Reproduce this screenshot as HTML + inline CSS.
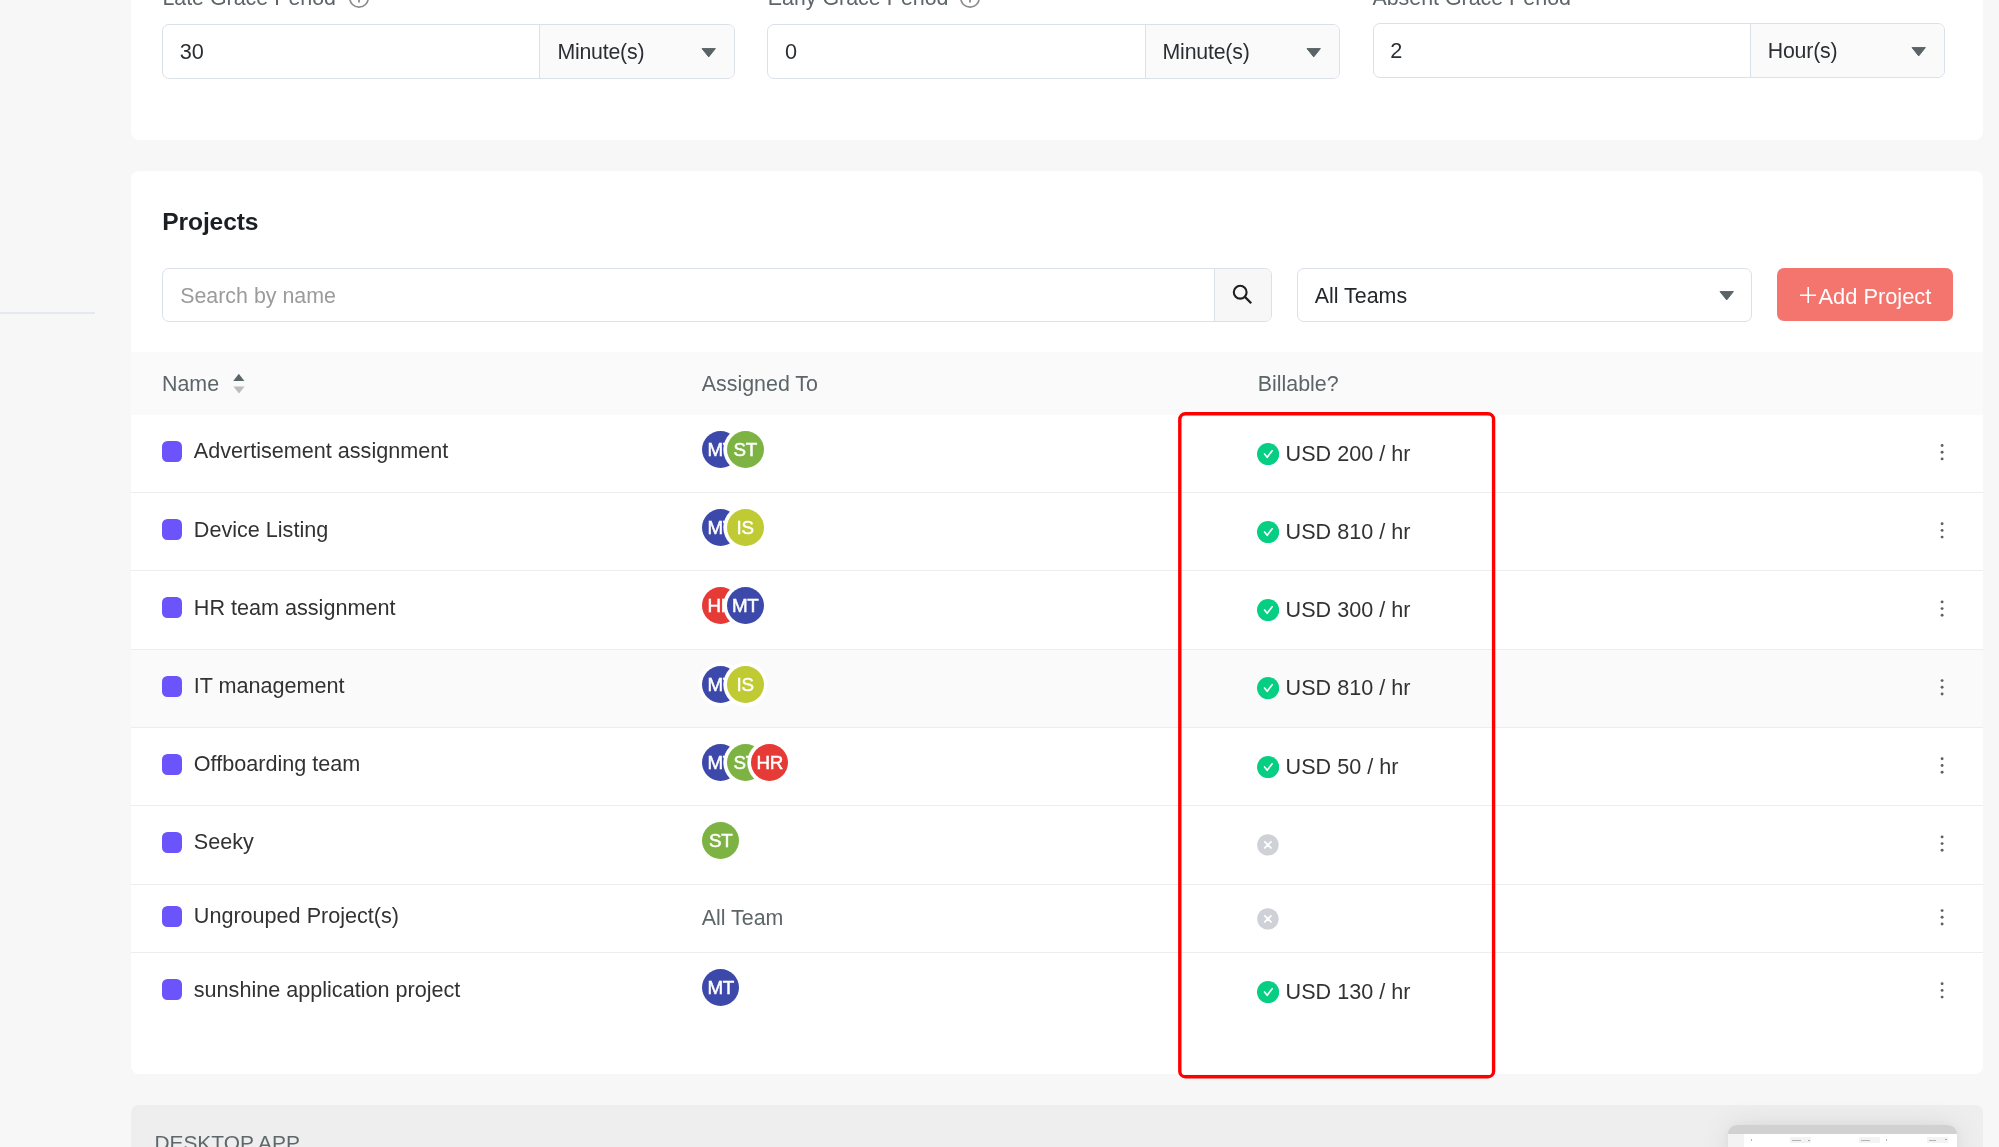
<!DOCTYPE html>
<html>
<head>
<meta charset="utf-8">
<title>Projects</title>
<style>
*{box-sizing:border-box;margin:0;padding:0}
html,body{width:1999px;height:1147px;overflow:hidden;background:#f7f7f7;font-family:"Liberation Sans",sans-serif;color:#333;}
body{position:relative}
#wrap{position:absolute;left:0;top:0;width:1999px;height:1147px;overflow:hidden;will-change:transform}
.abs{position:absolute}
.sideline{position:absolute;left:0;top:312.3px;width:94.6px;height:1.6px;background:#e4e9f0}
.card{position:absolute;left:131.2px;width:1852.2px;background:#fff;border-radius:8px}
#c1{top:-40px;height:180.4px}
#c2{top:171px;height:903px}
.lbl{position:absolute;font-size:21.4px;line-height:24px;color:#5c6669;white-space:nowrap}
.info{position:absolute;width:22px;height:22px}
.grp{position:absolute;height:55px;width:572.8px;border:1px solid #dbe1e9;border-radius:7px;background:#fff;overflow:hidden}
.grp .val{position:absolute;left:16.6px;top:14.9px;font-size:21.7px;line-height:24px;color:#2b2f33}
.grp .addon{position:absolute;right:0;top:0;bottom:0;width:194.6px;border-left:1px solid #dbe1e9;background:#fafafa}
.grp .addon span{position:absolute;left:17px;top:15.2px;font-size:21.3px;line-height:24px;color:#2b2f33;letter-spacing:-.2px}
.tri{position:absolute;width:15.4px;height:9.4px}
h2{position:absolute;left:31px;top:37px;font-size:24.6px;line-height:28px;font-weight:700;color:#1b1e22;letter-spacing:-.1px}
.search{position:absolute;left:31px;top:97px;width:1109.6px;height:54px;border:1px solid #dbe1e9;border-radius:7px;background:#fff;overflow:hidden}
.search .ph{position:absolute;left:17px;top:15.2px;font-size:21.4px;line-height:24px;color:#9b9b9b}
.search .sbtn{position:absolute;right:0;top:0;bottom:0;width:57px;border-left:1px solid #dbe1e9;background:#f7f7f7}
.sel{position:absolute;left:1165.4px;top:97px;width:455.6px;height:54px;border:1px solid #dbe1e9;border-radius:7px;background:#fff}
.sel span{position:absolute;left:17.2px;top:14.6px;font-size:21.4px;line-height:24px;color:#23272b}
.btn{position:absolute;left:1646.2px;top:96.8px;width:175.6px;height:53.6px;border-radius:7px;background:#f3756e;color:#fff}
.btn span{position:absolute;left:41.2px;top:17px;font-size:21.8px;line-height:24px;white-space:nowrap}
.thead{position:absolute;left:0;right:0;top:181.3px;height:62.7px;background:#fafafa}
.thead span{position:absolute;top:19.7px;font-size:21.4px;line-height:24px;color:#5c6669;white-space:nowrap}
.row{position:absolute;left:0;right:0;border-bottom:1.4px solid #ebeef1;background:#fff}
.row.hov{background:#fafafa}
.row.last{border-bottom:none}
.sq{position:absolute;left:30.8px;width:20.2px;height:21.2px;border-radius:5.5px;background:#6c54fc}
.nm{position:absolute;left:62.6px;font-size:21.6px;line-height:24px;color:#323232;white-space:nowrap}
.allteam{position:absolute;left:570.6px;font-size:21.4px;line-height:24px;color:#5c6669;white-space:nowrap}
.avs{position:absolute;left:568.1px;top:12.7px;height:43px}
.av{position:absolute;top:3.3px;margin-left:3px;width:37px;height:37px;border-radius:50%;box-shadow:0 0 0 3.7px #fff;color:#fff;font-size:18.8px;line-height:38px;text-align:center;overflow:hidden}
.av i{font-style:normal;display:block;letter-spacing:-.2px;-webkit-text-stroke:.5px #fff}
.av.b{background:#3c49ab}.av.g{background:#7cb343}.av.l{background:#c0ca33}.av.r{background:#e53a36}
.ok{position:absolute;left:1125.8px;top:27.8px;width:22.2px;height:22.2px}
.no{position:absolute;left:1124.8px;width:23.8px;height:23.8px}
.usd{position:absolute;left:1154.4px;top:26.5px;font-size:21.6px;line-height:24px;color:#323232;white-space:nowrap}
.dotsov{position:absolute;left:1798.8px;top:229px;width:24px;height:620px;fill:#5a6366}
.hl{position:absolute;left:1170px;top:405px;width:335px;height:680px}
.banner{position:absolute;left:131.2px;top:1104.8px;width:1852.2px;height:80px;background:#eeeeee;border-radius:8px}
.banner span{position:absolute;left:23.2px;top:26.2px;font-size:20.9px;line-height:24px;color:#5e686b;white-space:nowrap}
.thumb{position:absolute;left:1727.6px;top:1124.8px;width:229.6px;height:40px;border-radius:10px 10px 0 0;background:#fff;box-shadow:0 0 30px rgba(0,0,0,.085),0 0 8px rgba(0,0,0,.04)}
.thumb:before{content:"";position:absolute;left:0;right:0;top:0;height:9.4px;background:#d1d1d1;border-radius:10px 10px 0 0}
.thumb i{position:absolute;display:block}
.thumb:after{content:"";position:absolute;left:0;top:9.6px;width:16px;bottom:0;background:#f3f3f3}
</style>
</head>
<body>
<div id="wrap">
<div class="sideline"></div>

<div class="card" id="c1">
  <div class="lbl" style="left:31.2px;top:26.2px">Late Grace Period</div>
  <svg class="info" style="left:216.7px;top:27.2px" viewBox="0 0 22 22"><circle cx="11" cy="11" r="9.2" fill="none" stroke="#8a8d8f" stroke-width="1.7"/><path d="M11 9.6 V15.6" stroke="#8a8d8f" stroke-width="1.8"/></svg>
  <div class="lbl" style="left:636.6px;top:26.2px">Early Grace Period</div>
  <svg class="info" style="left:827.5px;top:27.2px" viewBox="0 0 22 22"><circle cx="11" cy="11" r="9.2" fill="none" stroke="#8a8d8f" stroke-width="1.7"/><path d="M11 9.6 V15.6" stroke="#8a8d8f" stroke-width="1.8"/></svg>
  <div class="lbl" style="left:1241.2px;top:25.5px">Absent Grace Period</div>

  <div class="grp" style="left:31px;top:63.8px">
    <div class="val">30</div>
    <div class="addon"><span>Minute(s)</span>
      <svg class="tri" style="right:17.6px;top:23.2px" viewBox="0 0 15.4 9.4"><path d="M1 0.6 H14.4 L7.7 8.9 Z" fill="#5a6366" stroke="#5a6366" stroke-width="1" stroke-linejoin="round"/></svg>
    </div>
  </div>
  <div class="grp" style="left:636.2px;top:63.8px">
    <div class="val">0</div>
    <div class="addon"><span>Minute(s)</span>
      <svg class="tri" style="right:17.6px;top:23.2px" viewBox="0 0 15.4 9.4"><path d="M1 0.6 H14.4 L7.7 8.9 Z" fill="#5a6366" stroke="#5a6366" stroke-width="1" stroke-linejoin="round"/></svg>
    </div>
  </div>
  <div class="grp" style="left:1241.4px;top:63.1px">
    <div class="val">2</div>
    <div class="addon"><span>Hour(s)</span>
      <svg class="tri" style="right:17.6px;top:23.2px" viewBox="0 0 15.4 9.4"><path d="M1 0.6 H14.4 L7.7 8.9 Z" fill="#5a6366" stroke="#5a6366" stroke-width="1" stroke-linejoin="round"/></svg>
    </div>
  </div>
</div>

<div class="card" id="c2">
  <h2>Projects</h2>
  <div class="search">
    <div class="ph">Search by name</div>
    <div class="sbtn">
      <svg style="position:absolute;left:17px;top:15.4px;width:21px;height:21px" viewBox="0 0 21 21"><circle cx="8.2" cy="8.2" r="6.4" fill="none" stroke="#1f1f1f" stroke-width="2.1"/><path d="M12.9 12.9 L19.2 19.2" stroke="#1f1f1f" stroke-width="2.3" stroke-linecap="butt"/></svg>
    </div>
  </div>
  <div class="sel"><span>All Teams</span>
    <svg class="tri" style="right:16.6px;top:22px" viewBox="0 0 15.4 9.4"><path d="M1 0.6 H14.4 L7.7 8.9 Z" fill="#5a6366" stroke="#5a6366" stroke-width="1" stroke-linejoin="round"/></svg>
  </div>
  <div class="btn">
    <svg style="position:absolute;left:22.4px;top:18.9px;width:16.4px;height:16.4px" viewBox="0 0 16.4 16.4"><path d="M8.2 0 V16.4 M0 8.2 H16.4" stroke="#fff" stroke-width="1.6"/></svg>
    <span>Add Project</span>
  </div>
  <div class="thead">
    <span style="left:30.8px">Name</span>
    <svg style="position:absolute;left:101.4px;top:21.4px;width:12px;height:20px" viewBox="0 0 12 20"><path d="M0.2 7.0 L5.8 -0.2 L11.4 7.0 Z" fill="#5a6568"/><path d="M0.4 12.6 L6 19.6 L11.6 12.6 Z" fill="#bcbcbc"/></svg>
    <span style="left:570.6px">Assigned To</span>
    <span style="left:1126.6px">Billable?</span>
  </div>
<div class="row" style="top:244.0px;height:78.3px"><span class="sq" style="top:26.0px"></span><span class="nm" style="top:23.82px">Advertisement assignment</span><span class="avs"><span class="av b" style="left:0.0px;z-index:1"><i>MT</i></span><span class="av g" style="left:24.5px;z-index:2"><i>ST</i></span></span><svg class="ok" viewBox="0 0 22 22"><circle cx="11" cy="11" r="11" fill="#06cf83"/><path d="M7.5 10.8 L10.1 14.2 L15.0 7.7" fill="none" stroke="#fff" stroke-width="1.6" stroke-linecap="round" stroke-linejoin="round"/></svg><span class="usd" style="top:26.82px">USD 200 / hr</span></div>
<div class="row" style="top:322.3px;height:77.9px"><span class="sq" style="top:26.0px"></span><span class="nm" style="top:24.52px">Device Listing</span><span class="avs"><span class="av b" style="left:0.0px;z-index:1"><i>MT</i></span><span class="av l" style="left:24.5px;z-index:2"><i>IS</i></span></span><svg class="ok" viewBox="0 0 22 22"><circle cx="11" cy="11" r="11" fill="#06cf83"/><path d="M7.5 10.8 L10.1 14.2 L15.0 7.7" fill="none" stroke="#fff" stroke-width="1.6" stroke-linecap="round" stroke-linejoin="round"/></svg><span class="usd" style="top:26.52px">USD 810 / hr</span></div>
<div class="row" style="top:400.2px;height:78.4px"><span class="sq" style="top:26.0px"></span><span class="nm" style="top:24.62px">HR team assignment</span><span class="avs"><span class="av r" style="left:0.0px;z-index:1"><i>HR</i></span><span class="av b" style="left:24.5px;z-index:2"><i>MT</i></span></span><svg class="ok" viewBox="0 0 22 22"><circle cx="11" cy="11" r="11" fill="#06cf83"/><path d="M7.5 10.8 L10.1 14.2 L15.0 7.7" fill="none" stroke="#fff" stroke-width="1.6" stroke-linecap="round" stroke-linejoin="round"/></svg><span class="usd" style="top:26.62px">USD 300 / hr</span></div>
<div class="row hov" style="top:478.6px;height:78.2px"><span class="sq" style="top:26.0px"></span><span class="nm" style="top:24.22px">IT management</span><span class="avs"><span class="av b" style="left:0.0px;z-index:1"><i>MT</i></span><span class="av l" style="left:24.5px;z-index:2"><i>IS</i></span></span><svg class="ok" viewBox="0 0 22 22"><circle cx="11" cy="11" r="11" fill="#06cf83"/><path d="M7.5 10.8 L10.1 14.2 L15.0 7.7" fill="none" stroke="#fff" stroke-width="1.6" stroke-linecap="round" stroke-linejoin="round"/></svg><span class="usd" style="top:26.22px">USD 810 / hr</span></div>
<div class="row" style="top:556.8px;height:78.0px"><span class="sq" style="top:26.0px"></span><span class="nm" style="top:24.02px">Offboarding team</span><span class="avs"><span class="av b" style="left:0.0px;z-index:1"><i>MT</i></span><span class="av g" style="left:24.5px;z-index:2"><i>ST</i></span><span class="av r" style="left:49.0px;z-index:3"><i>HR</i></span></span><svg class="ok" viewBox="0 0 22 22"><circle cx="11" cy="11" r="11" fill="#06cf83"/><path d="M7.5 10.8 L10.1 14.2 L15.0 7.7" fill="none" stroke="#fff" stroke-width="1.6" stroke-linecap="round" stroke-linejoin="round"/></svg><span class="usd" style="top:27.02px">USD 50 / hr</span></div>
<div class="row" style="top:634.8px;height:78.8px"><span class="sq" style="top:26.0px"></span><span class="nm" style="top:24.02px">Seeky</span><span class="avs"><span class="av g" style="left:0.0px;z-index:1"><i>ST</i></span></span><svg class="no" style="top:27.5px" viewBox="-1 -1 24 24"><circle cx="11" cy="11" r="10.8" fill="#ced1d6"/><path d="M7.9 7.9 L14.1 14.1 M14.1 7.9 L7.9 14.1" fill="none" stroke="#fff" stroke-width="1.8" stroke-linecap="round"/></svg></div>
<div class="row" style="top:713.6px;height:68.2px"><span class="sq" style="top:21.3px"></span><span class="nm" style="top:19.22px">Ungrouped Project(s)</span><span class="allteam" style="top:21.9px">All Team</span><svg class="no" style="top:22.3px" viewBox="-1 -1 24 24"><circle cx="11" cy="11" r="10.8" fill="#ced1d6"/><path d="M7.9 7.9 L14.1 14.1 M14.1 7.9 L7.9 14.1" fill="none" stroke="#fff" stroke-width="1.8" stroke-linecap="round"/></svg></div>
<div class="row last" style="top:781.8px;height:78.2px"><span class="sq" style="top:26.0px"></span><span class="nm" style="top:25.02px">sunshine application project</span><span class="avs"><span class="av b" style="left:0.0px;z-index:1"><i>MT</i></span></span><svg class="ok" viewBox="0 0 22 22"><circle cx="11" cy="11" r="11" fill="#06cf83"/><path d="M7.5 10.8 L10.1 14.2 L15.0 7.7" fill="none" stroke="#fff" stroke-width="1.6" stroke-linecap="round" stroke-linejoin="round"/></svg><span class="usd" style="top:27.02px">USD 130 / hr</span></div>
<svg class="dotsov" viewBox="0 0 24 620"><circle cx="12.1" cy="45.5" r="1.45"/><circle cx="12.1" cy="52.2" r="1.45"/><circle cx="12.1" cy="58.9" r="1.45"/><circle cx="12.1" cy="123.7" r="1.45"/><circle cx="12.1" cy="130.4" r="1.45"/><circle cx="12.1" cy="137.1" r="1.45"/><circle cx="12.1" cy="201.9" r="1.45"/><circle cx="12.1" cy="208.6" r="1.45"/><circle cx="12.1" cy="215.3" r="1.45"/><circle cx="12.1" cy="280.6" r="1.45"/><circle cx="12.1" cy="287.3" r="1.45"/><circle cx="12.1" cy="294.0" r="1.45"/><circle cx="12.1" cy="358.8" r="1.45"/><circle cx="12.1" cy="365.5" r="1.45"/><circle cx="12.1" cy="372.2" r="1.45"/><circle cx="12.1" cy="436.9" r="1.45"/><circle cx="12.1" cy="443.6" r="1.45"/><circle cx="12.1" cy="450.3" r="1.45"/><circle cx="12.1" cy="510.6" r="1.45"/><circle cx="12.1" cy="517.3" r="1.45"/><circle cx="12.1" cy="524.0" r="1.45"/><circle cx="12.1" cy="583.7" r="1.45"/><circle cx="12.1" cy="590.4" r="1.45"/><circle cx="12.1" cy="597.1" r="1.45"/></svg>
</div>

<svg class="hl" viewBox="0 0 335 680"><rect x="9.8" y="8.8" width="313.8" height="663" rx="5.6" fill="none" stroke="#ff0000" stroke-width="3.4"/></svg>

<div class="banner"><span>DESKTOP APP</span></div>
<div class="thumb">
  <i style="left:23px;top:14.6px;width:1.4px;height:2px;background:#b4b4b4"></i>
  <i style="left:62px;top:12.4px;width:21px;height:5.4px;background:#f3f3f3"></i>
  <i style="left:64px;top:14.8px;width:9px;height:1.2px;background:#b4b4b4"></i>
  <i style="left:80px;top:14.8px;width:2px;height:1.2px;background:#aaa"></i>
  <i style="left:131px;top:12.4px;width:21px;height:5.4px;background:#f3f3f3"></i>
  <i style="left:133px;top:14.8px;width:9px;height:1.2px;background:#b4b4b4"></i>
  <i style="left:158.4px;top:14px;width:1.4px;height:2px;background:#b4b4b4"></i>
  <i style="left:199px;top:12.4px;width:21px;height:5.4px;background:#f3f3f3"></i>
  <i style="left:201px;top:14.8px;width:7px;height:1.2px;background:#b4b4b4"></i>
  <i style="left:217px;top:14.2px;width:2px;height:1.2px;background:#aaa"></i>
</div>
</div>
</body>
</html>
